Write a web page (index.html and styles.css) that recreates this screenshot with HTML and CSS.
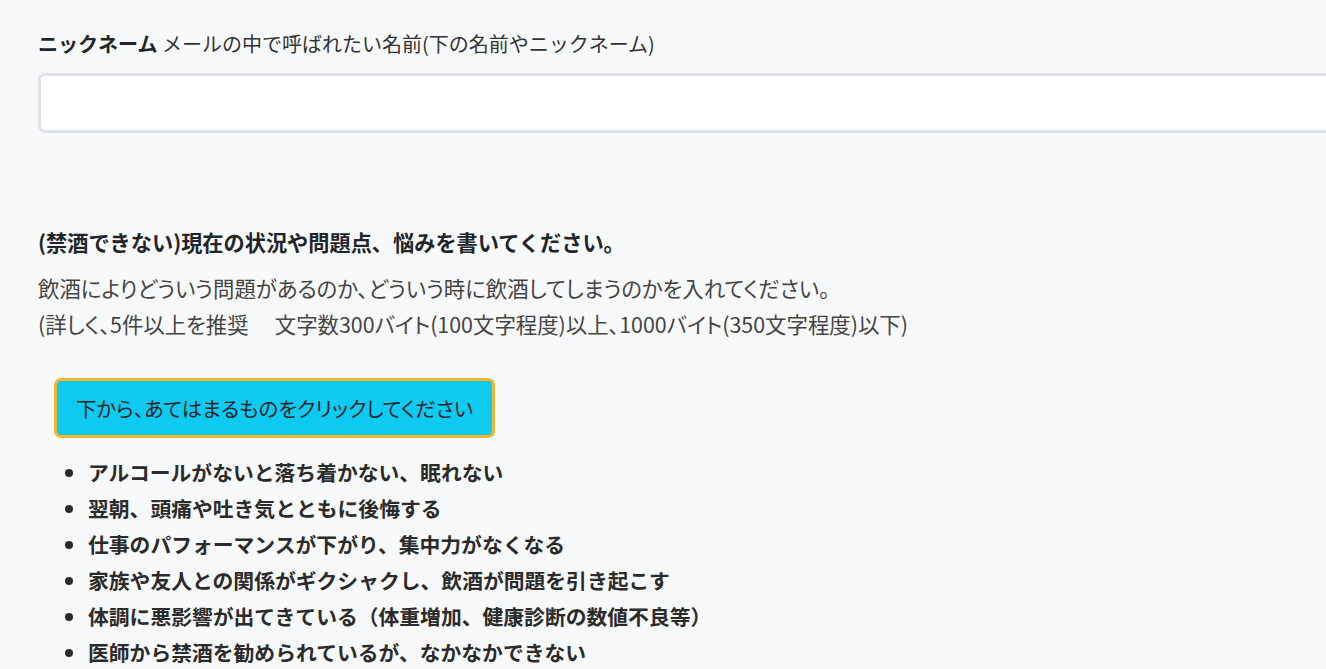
FILE: index.html
```html
<!DOCTYPE html>
<html lang="ja">
<head>
<meta charset="utf-8">
<link rel="stylesheet" href="styles.css">
</head>
<body>
<main class="form">
  <section class="field">
    <label class="label"><strong>ニックネーム</strong> メールの中で呼ばれたい名前(下の名前やニックネーム)</label>
    <input class="input" type="text">
  </section>
  <section class="field concern">
    <h5 class="heading">(禁酒できない)現在の状況や問題点、悩みを書いてください。</h5>
    <p class="desc">飲酒によりどういう問題があるのか、どういう時に飲酒してしまうのかを入れてください。<br>(詳しく、5件以上を推奨　 文字数300バイト(100文字程度)以上、1000バイト(350文字程度)以下)</p>
    <div class="btn-wrap"><button class="btn" type="button">下から、あてはまるものをクリックしてください</button></div>
    <ul class="list">
      <li>アルコールがないと落ち着かない、眠れない</li>
      <li>翌朝、頭痛や吐き気とともに後悔する</li>
      <li>仕事のパフォーマンスが下がり、集中力がなくなる</li>
      <li>家族や友人との関係がギクシャクし、飲酒が問題を引き起こす</li>
      <li>体調に悪影響が出てきている（体重増加、健康診断の数値不良等）</li>
      <li>医師から禁酒を勧められているが、なかなかできない</li>
    </ul>
  </section>
</main>
</body>
</html>
```
FILE: styles.css
```css
html, body {
  margin: 0;
  padding: 0;
  background: #f8f9fa;
  overflow: hidden;
}
body {
  font-family: "Noto Sans CJK JP", "Noto Sans", sans-serif;
  color: #212529;
  font-size: 20px;
}
.form {
  padding: 24px 0 0 38px;
  display: flex;
  flex-direction: column;
}
.field {
  display: flex;
  flex-direction: column;
}
.label {
  font-size: 20px;
  line-height: 40px;
  margin-bottom: 9px;
  color: #333;
}
.label strong {
  color: #212529;
}
.input {
  box-sizing: border-box;
  width: 1320px;
  height: 60px;
  border: 3px solid #dee2e6;
  border-radius: 7px;
  background: #fff;
  font-size: 20px;
}
.concern {
  margin-top: 89px;
}
.heading {
  margin: 0;
  font-size: 21.2px;
  font-weight: 700;
  line-height: 40px;
  color: #212529;
}
.desc {
  margin: 8px 0 0;
  font-size: 21.4px;
  font-feature-settings: "palt";
  line-height: 36px;
  color: #444;
}
.btn-wrap {
  padding: 36px 0 0 16px;
}
.btn {
  box-sizing: border-box;
  height: 60px;
  padding: 0 19px;
  background: #0dcaf0;
  border: 3px solid #f5b62a;
  border-radius: 7px;
  font-family: inherit;
  font-feature-settings: "palt";
  font-size: 20.4px;
  color: #212529;
}
.list {
  margin: 16px 0 0;
  padding-left: 50px;
  font-size: 20.8px;
  line-height: 36px;
  font-weight: 700;
  color: #2b2b2b;
}
```
